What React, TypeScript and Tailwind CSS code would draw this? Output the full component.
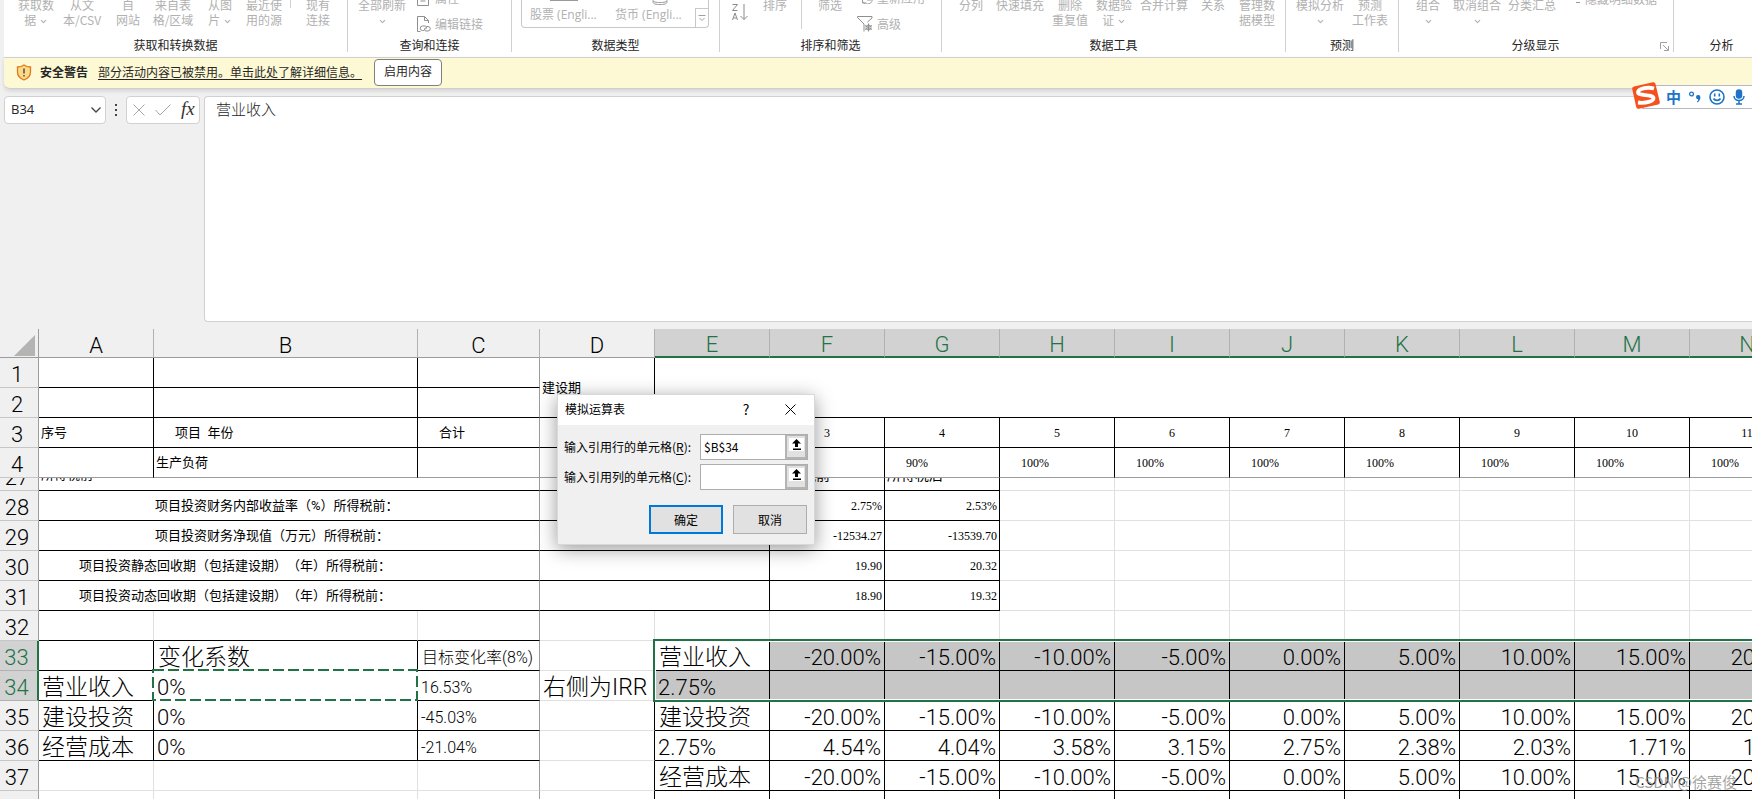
import { useState } from "react";
import type { ReactNode } from "react";
import { ChevronDown } from "lucide-react";

type Line = "black" | "grid" | "none" | "freeze";

type Cell = {
  text?: string;
  span?: number;
  rows?: number;
  className?: string;
  right?: Line;
  bottom?: Line;
  copied?: boolean;
};

type Row = { n: number; cells: Cell[]; height?: string };

const RIGHT: Record<Line, string> = {
  black: "border-r border-r-black",
  grid: "border-r border-r-[#e0e0e0]",
  freeze: "border-r border-r-[#9c9c9c]",
  none: "",
};

const BOTTOM: Record<Line, string> = {
  black: "border-b border-b-black",
  grid: "border-b border-b-[#e0e0e0]",
  freeze: "border-b border-b-[#9c9c9c]",
  none: "",
};

const COLUMNS = ["A", "B", "C", "D", "E", "F", "G", "H", "I", "J", "K", "L", "M", "N"];

const small = "text-[13px] font-normal [text-spacing-trim:space-all]";
const num = "text-xs font-['Liberation_Serif','Noto_Sans_CJK_SC',serif]";
const big = "pt-1 text-[23px] leading-[25px] font-light";
const pct = "pt-1 text-[22px] leading-[25px] font-light text-right pr-[3px]";
const pctLeft = "pt-1 text-[22px] leading-[25px] font-light pl-[3px]";
const mid = "pt-1 text-base leading-[25px] font-light";

const yearCells: Cell[] = ["3", "4", "5", "6", "7", "8", "9", "10", "11"].map((text) => ({
  text,
  className: `${num} text-center`,
}));

const loadCells: Cell[] = ["", "90%", "100%", "100%", "100%", "100%", "100%", "100%", "100%"].map((text) => ({
  text,
  className: `${num} pl-[21px]`,
  bottom: "freeze" as Line,
}));

const blanks = (count: number, line: Line = "grid"): Cell[] =>
  Array.from({ length: count }, () => ({ right: line, bottom: line }));

const series = (values: string[]): Cell[] => values.map((text) => ({ text, className: pct }));

const CHANGES = ["-20.00%", "-15.00%", "-10.00%", "-5.00%", "0.00%", "5.00%", "10.00%", "15.00%", "20.00%"];
const INVESTMENT = ["4.54%", "4.04%", "3.58%", "3.15%", "2.75%", "2.38%", "2.03%", "1.71%", "1.41%"];

const result = (text: string, indent: string, before: string, after: string): Cell[] => [
  { text, span: 3, className: `${small} ${indent}`, right: "freeze" },
  { span: 2 },
  { text: before, className: `${num} text-right pr-[2px]` },
  { text: after, className: `${num} text-right pr-[2px]` },
  ...blanks(7),
];

const ROWS: Row[] = [
  {
    n: 1,
    cells: [
      {},
      {},
      { right: "freeze" },
      { text: "建设期", rows: 2, className: `${small} pl-[2px]` },
      { span: 10, rows: 2 },
    ],
  },
  { n: 2, cells: [{}, {}, { right: "freeze" }] },
  {
    n: 3,
    cells: [
      { text: "序号", className: `${small} pl-[2px]` },
      { text: "项目  年份", className: `${small} pl-[21px]` },
      { text: "合计", className: `${small} pl-[21px]`, right: "freeze" },
      {},
      {},
      ...yearCells,
    ],
  },
  {
    n: 4,
    cells: [
      { bottom: "freeze" },
      { text: "生产负荷", className: `${small} pl-[2px]`, bottom: "freeze" },
      { bottom: "freeze", right: "freeze" },
      { bottom: "freeze" },
      { bottom: "freeze" },
      ...loadCells,
    ],
  },
  {
    n: 27,
    height: "h-[13px]",
    cells: [
      { text: "所得税前", span: 3, className: `${small} pl-[2px]`, right: "freeze" },
      { span: 2 },
      { text: "所得税前", className: "text-sm pl-1" },
      { text: "所得税后", className: "text-sm pl-[2px]" },
      ...blanks(7),
    ],
  },
  { n: 28, cells: result("项目投资财务内部收益率（%）所得税前：", "pl-[116px]", "2.75%", "2.53%") },
  { n: 29, cells: result("项目投资财务净现值（万元）所得税前：", "pl-[116px]", "-12534.27", "-13539.70") },
  { n: 30, cells: result("项目投资静态回收期（包括建设期）（年）所得税前：", "pl-[40px]", "19.90", "20.32") },
  { n: 31, cells: result("项目投资动态回收期（包括建设期）（年）所得税前：", "pl-[40px]", "18.90", "19.32") },
  {
    n: 32,
    cells: [
      { right: "grid" },
      { right: "grid" },
      { right: "freeze" },
      ...blanks(11),
    ],
  },
  {
    n: 33,
    cells: [
      {},
      { text: "变化系数", className: `${big} pl-1` },
      { text: "目标变化率(8%)", className: `${mid} pl-1`, right: "freeze" },
      { right: "grid", bottom: "grid" },
      { text: "营业收入", className: `${big} pl-1` },
      ...series(CHANGES).map((c) => ({ ...c, className: `${pct} bg-[#c6c6c6]` })),
    ],
  },
  {
    n: 34,
    cells: [
      { text: "营业收入", className: `${big} pl-[3px]` },
      { text: "0%", className: pctLeft, copied: true },
      { text: "16.53%", className: `${mid} pl-[3px]`, right: "freeze" },
      { text: "右侧为IRR", className: `${big} pl-[3px]`, right: "grid", bottom: "grid" },
      { text: "2.75%", className: `${pctLeft} bg-[#c6c6c6]` },
      ...Array.from({ length: 9 }, () => ({ className: "bg-[#c6c6c6]" })),
    ],
  },
  {
    n: 35,
    cells: [
      { text: "建设投资", className: `${big} pl-[3px]` },
      { text: "0%", className: pctLeft },
      { text: "-45.03%", className: `${mid} pl-[3px]`, right: "freeze" },
      { bottom: "grid" },
      { text: "建设投资", className: `${big} pl-1` },
      ...series(CHANGES),
    ],
  },
  {
    n: 36,
    cells: [
      { text: "经营成本", className: `${big} pl-[3px]` },
      { text: "0%", className: pctLeft },
      { text: "-21.04%", className: `${mid} pl-[3px]`, right: "freeze" },
      { bottom: "grid" },
      { text: "2.75%", className: pctLeft },
      ...series(INVESTMENT),
    ],
  },
  {
    n: 37,
    cells: [
      ...blanks(2),
      { right: "freeze", bottom: "grid" },
      { bottom: "grid" },
      { text: "经营成本", className: `${big} pl-1` },
      ...series(CHANGES),
    ],
  },
  {
    n: 38,
    cells: [...blanks(2), { right: "freeze", bottom: "grid" }, { bottom: "grid" }, ...blanks(10, "black")],
  },
];

function Drop() {
  return <ChevronDown className="inline size-[9px]" strokeWidth={3} />;
}

function Tool({ lines, className = "" }: { lines: ReactNode[]; className?: string }) {
  return (
    <button className={`flex shrink-0 flex-col items-center whitespace-nowrap text-xs leading-[15px] ${className}`}>
      {lines.map((line, i) => (
        <span key={i} className="h-[15px]">
          {line}
        </span>
      ))}
    </button>
  );
}

function Group({ title, className, children, launcher }: { title: string; className: string; children?: ReactNode; launcher?: boolean }) {
  return (
    <section className={`flex h-[52px] shrink-0 flex-col border-r border-[#d1d1d1] ${className}`}>
      <div className="flex h-[37px] items-start text-[#b1b1b1]">{children}</div>
      <div className="flex h-[15px] items-center justify-center text-xs text-[#262626]">
        <h2 className="grow text-center">{title}</h2>
        {launcher && (
          <svg className="-ml-3 mr-1 mt-1 size-[9px]" viewBox="0 0 9 9" fill="none" stroke="#a0a0a0">
            <path d="M.5 7V.5H7M3 3l5 5M8.5 4v4.5H4" />
          </svg>
        )}
      </div>
    </section>
  );
}

function DocIcon({ link }: { link?: boolean }) {
  return (
    <svg className="h-4 w-[14px]" viewBox="0 0 14 16" fill="none" stroke="#8f8f8f">
      <path d="M3.500 15.500H.5V.5H7.500L11.500 4.500V7M7.500.5V4.500H11.500" />
      {link ? (
        <path d="M7 14.500H5.500a2.200 2.200 0 0 1 0-4.500H8c2 0 2 3 .5 3M9.500 10.500H11a2.200 2.200 0 0 1 0 4.500H9c-2 0-2-3-.5-3" />
      ) : (
        <path d="M11.500 7V15.500H3M3.500 8h5M3.500 11h5" />
      )}
    </svg>
  );
}

function Ribbon() {
  return (
    <div className="ml-1 flex h-[57px] overflow-hidden bg-white">
      <Group title="获取和转换数据" className="w-[344px]">
        <Tool className="-mt-[3px] ml-[14px] w-9" lines={["获取数", <>据 <Drop /></>]} />
        <Tool className="-mt-[3px] ml-2 w-10" lines={["从文", "本/CSV"]} />
        <Tool className="-mt-[3px] ml-[14px] w-6" lines={["自", "网站"]} />
        <Tool className="-mt-[3px] ml-3 w-[42px]" lines={["来自表", "格/区域"]} />
        <Tool className="-mt-[3px] ml-[14px] w-6" lines={["从图", <>片 <Drop /></>]} />
        <Tool className="-mt-[3px] ml-[14px] w-9" lines={["最近使", "用的源"]} />
        <span className="ml-2 h-2 w-px bg-[#d1d1d1]" />
        <Tool className="-mt-[3px] ml-[15px] w-6" lines={["现有", "连接"]} />
      </Group>
      <Group title="查询和连接" className="w-[164px]">
        <Tool className="-mt-[3px] ml-[10px] w-12" lines={["全部刷新", <Drop />]} />
        <div className="-mt-[10px] ml-[11px] flex flex-col gap-[10px] text-xs leading-4">
          <button className="flex items-center gap-1"><DocIcon />属性</button>
          <button className="flex items-center gap-1"><DocIcon link />编辑链接</button>
        </div>
      </Group>
      <Group title="数据类型" className="w-[208px]">
        <div className="ml-[9px] flex h-7 w-[188px] rounded-b border border-t-0 border-[#c8c8c8] text-xs">
          <button className="relative flex-1 pl-2 pt-[2px] text-left leading-5 font-['Open_Sans','Noto_Sans_CJK_SC',sans-serif]">
            <span className="absolute left-7 top-0 h-px w-7 bg-[#9a9a9a]" />
            股票 (Engli...
          </button>
          <button className="relative flex-1 pl-[5px] pt-[2px] text-left leading-5 font-['Open_Sans','Noto_Sans_CJK_SC',sans-serif]">
            <svg className="absolute left-[42px] top-0 h-[5px] w-4" viewBox="0 0 16 5" fill="none" stroke="#9a9a9a">
              <path d="M1 0c0 2 3 2.500 7 2.500S15 2 15 0M1 1v1c0 2 3 2.500 7 2.500S15 4 15 2V1" />
            </svg>
            货币 (Engli...
          </button>
          <button className="mt-2 flex w-[13px] items-center justify-center border-l border-t border-[#c8c8c8]" aria-label="更多">
            <svg className="size-2" viewBox="0 0 8 8" fill="none" stroke="#a0a0a0">
              <path d="M.5 1.500h7M1.500 4l2.500 2.500L6.500 4" />
            </svg>
          </button>
        </div>
      </Group>
      <Group title="排序和筛选" className="w-[222px]">
        <svg className="ml-3 mt-1 h-[17px] w-4" viewBox="0 0 16 17" fill="none" stroke="#8a8a8a">
          <path d="M.5.5h5L.5 6.500h5M.5 16L3 9l2.500 7M1.500 14h3M12 0v15.500M8.500 12l3.500 3.500L15.500 12" />
        </svg>
        <Tool className="-mt-[3px] ml-[15px] w-6" lines={["排序"]} />
        <span className="ml-[14px] h-[29px] w-px bg-[#d1d1d1]" />
        <Tool className="-mt-[3px] ml-4 w-6" lines={["筛选"]} />
        <div className="-mt-[10px] ml-[15px] flex flex-col gap-[10px] text-xs leading-4">
          <button className="flex items-center gap-1 pl-1">
            <svg className="size-3" viewBox="0 0 12 12" fill="none" stroke="#9a9a9a">
              <path d="M1.500 1v10M1.500 11h4M1 8a5 5 0 0 1 9-3M11 6a5 5 0 0 1-9 4M6 8h4v-4" />
            </svg>
            重新应用
          </button>
          <button className="flex items-center gap-1">
            <svg className="size-4" viewBox="0 0 16 16" fill="none" stroke="#8f8f8f">
              <path d="M7 15.500V8L.5 1.500V.5H15V2L10.500 6" />
              <circle cx="11.500" cy="11.500" r="2.500" />
              <path d="M11.500 7.500v8M8 9.500l7 4M15 9.500l-7 4" />
            </svg>
            高级
          </button>
        </div>
      </Group>
      <Group title="数据工具" className="w-[344px]">
        <Tool className="-mt-[3px] ml-[17px] w-6" lines={["分列"]} />
        <Tool className="-mt-[3px] ml-[13px] w-12" lines={["快速填充"]} />
        <Tool className="-mt-[3px] ml-2 w-9" lines={["删除", "重复值"]} />
        <Tool className="-mt-[3px] ml-2 w-9" lines={["数据验", <>证 <Drop /></>]} />
        <Tool className="-mt-[3px] ml-2 w-12" lines={["合并计算"]} />
        <Tool className="-mt-[3px] ml-[13px] w-6" lines={["关系"]} />
        <Tool className="-mt-[3px] ml-[14px] w-9" lines={["管理数", "据模型"]} />
      </Group>
      <Group title="预测" className="w-[113px]">
        <Tool className="-mt-[3px] ml-[10px] w-12" lines={["模拟分析", <Drop />]} />
        <Tool className="-mt-[3px] ml-2 w-9" lines={["预测", "工作表"]} />
      </Group>
      <Group title="分级显示" className="w-[275px]" launcher>
        <Tool className="-mt-[3px] ml-[17px] w-6" lines={["组合", <Drop />]} />
        <Tool className="-mt-[3px] ml-[13px] w-12" lines={["取消组合", <Drop />]} />
        <Tool className="-mt-[3px] ml-[7px] w-12" lines={["分类汇总"]} />
        <span className="ml-5 mt-[2px] h-px w-1 bg-[#9a9a9a]" />
        <Tool className="-mt-[9px] ml-[5px]" lines={["隐藏明细数据"]} />
      </Group>
      <Group title="分析" className="w-[96px]" />
    </div>
  );
}

function SecurityBar() {
  return (
    <div className="ml-1 flex h-8 items-center rounded-bl-md border-y border-[#cfcfcf] bg-[#fef9d5] pb-[2px] pl-3 text-xs text-[#262626] shadow-[0_2px_4px_rgba(0,0,0,0.12)]">
      <svg className="h-[17px] w-4" viewBox="0 0 16 17">
        <path d="M8 1c2 1.500 4 2 6.500 2v5c0 4-2.500 6.500-6.500 8C4 14.500 1.500 12 1.500 8V3C4 3 6 2.500 8 1z" fill="#fbd98a" stroke="#e07b1a" strokeWidth="1.300" />
        <path d="M8 4.500v5M8 11v1.500" stroke="#5c5030" strokeWidth="1.500" />
      </svg>
      <strong className="ml-2">安全警告</strong>
      <a href="#details" className="ml-[10px] underline underline-offset-2">
        部分活动内容已被禁用。单击此处了解详细信息。
      </a>
      <button className="ml-3 h-[27px] w-[68px] rounded border border-[#7f7f7f] bg-white pb-[2px]">启用内容</button>
    </div>
  );
}

function FormulaBar() {
  const [formula, setFormula] = useState("营业收入");
  return (
    <div className="flex h-[226px] items-start pl-1">
      <div className="flex h-7 w-[102px] items-center rounded border border-[#d1d1d1] bg-white pr-1">
        <input
          aria-label="名称框"
          defaultValue="B34"
          className="w-0 grow pl-[6px] text-[13px] text-[#262626] outline-none font-['Open_Sans','Noto_Sans_CJK_SC',sans-serif]"
        />
        <svg className="h-[6px] w-[10px]" viewBox="0 0 10 6" fill="none" stroke="#444" strokeWidth="1.300">
          <path d="M.5.5L5 5L9.500.5" />
        </svg>
      </div>
      <div className="mx-2 flex h-7 w-1 flex-col items-center justify-center gap-[3px]">
        <span className="size-[2px] bg-[#444]" />
        <span className="size-[2px] bg-[#444]" />
        <span className="size-[2px] bg-[#444]" />
      </div>
      <div className="flex h-7 w-[74px] items-center rounded border border-[#d1d1d1] bg-white pl-[6px]">
        <button aria-label="取消">
          <svg className="size-3" viewBox="0 0 12 12" stroke="#a8a8a8" fill="none">
            <path d="M.5.5l11 11M11.500.5l-11 11" />
          </svg>
        </button>
        <button aria-label="输入" className="ml-[10px]">
          <svg className="h-3 w-4" viewBox="0 0 16 12" stroke="#a8a8a8" fill="none">
            <path d="M.5 6l4.500 5L15.500.5" />
          </svg>
        </button>
        <button className="ml-[10px] pb-[2px] text-[19px] italic leading-5 text-[#333] font-['Liberation_Serif',serif]">fx</button>
      </div>
      <textarea
        aria-label="编辑栏"
        value={formula}
        onChange={(e) => setFormula(e.target.value)}
        className="ml-1 h-[226px] w-0 grow resize-none rounded-l-[4px] border border-r-0 border-[#d1d1d1] bg-white px-[11px] py-0 text-[15px] leading-6 text-[#262626] outline-none font-['Noto_Sans_CJK_SC',sans-serif] font-light"
      />
    </div>
  );
}

function SheetCell({ cell, clip }: { cell: Cell; clip?: boolean }) {
  const { text, span, rows, className = "", right = "black", bottom = "black", copied } = cell;
  return (
    <td
      colSpan={span}
      rowSpan={rows}
      className={`whitespace-pre p-0 align-middle ${RIGHT[right]} ${BOTTOM[bottom]} ${copied ? "relative overflow-visible" : "overflow-hidden"} ${className}`}
    >
      {clip ? (
        <div className="flex h-3 items-end overflow-hidden leading-[18px]">{text && <span className="pb-[6px]">{text}</span>}</div>
      ) : (
        text
      )}
      {copied && (
        <svg className="absolute -left-[2px] -top-[2px] h-8 w-[266px]" fill="none" stroke="#217346" strokeWidth="2">
          <rect x="1" y="1" width="264" height="30" stroke="#fff" />
          <rect x="1" y="1" width="264" height="30" strokeDasharray="11 4" />
        </svg>
      )}
    </td>
  );
}

function Sheet() {
  return (
    <div className="relative mt-[7px] overflow-hidden bg-white">
      <table className="w-[1920px] table-fixed border-separate border-spacing-0 text-black font-['Roboto','Noto_Sans_CJK_SC',sans-serif]">
        <colgroup>
          <col className="w-[39px]" />
          <col className="w-[115px]" />
          <col className="w-[264px]" />
          <col className="w-[122px]" />
          {COLUMNS.slice(3).map((c) => (
            <col key={c} className="w-[115px]" />
          ))}
          <col />
        </colgroup>
        <thead>
          <tr className="h-[29px]">
            <th className="border-b border-r border-[#9c9c9c] bg-[#f0f0f0] p-0">
              <svg className="ml-[14px] mt-1 h-[21px] w-[21px]" viewBox="0 0 21 21">
                <path d="M21 0v21H0z" fill="#b4b4b4" />
              </svg>
            </th>
            {COLUMNS.map((c, i) => (
              <th
                key={c}
                className={`p-0 pt-[5px] text-[22px] font-light leading-[22px] ${
                  i > 3
                    ? "border-b-2 border-r border-b-[#217346] border-r-[#b1b1b1] bg-[#d2d2d2] text-[#217346]"
                    : "border-b border-r border-b-[#9c9c9c] border-r-[#b1b1b1] bg-[#f0f0f0]"
                }`}
              >
                {c}
              </th>
            ))}
          </tr>
        </thead>
        <tbody>
          {ROWS.map((row) => {
            const clip = row.n === 27;
            const selected = row.n === 33 || row.n === 34;
            return (
              <tr key={row.n} className={`leading-[29px] ${row.height ?? "h-[30px]"}`}>
                <th
                  className={`overflow-hidden p-0 text-[22px] font-light ${
                    selected
                      ? "border-b border-r-2 border-b-[#b1b1b1] border-r-[#217346] bg-[#d2d2d2] text-[#217346]"
                      : "border-b border-r border-b-[#c6c6c6] border-r-[#9c9c9c] bg-[#f0f0f0]"
                  }`}
                >
                  <div
                    className={
                      clip ? "flex h-3 items-end justify-center overflow-hidden pr-1" : "h-[29px] pr-1 pt-[5px] leading-6"
                    }
                  >
                    {clip ? <span className="leading-6">27</span> : row.n}
                  </div>
                </th>
                {row.cells.map((cell, i) => (
                  <SheetCell key={i} cell={cell} clip={clip} />
                ))}
              </tr>
            );
          })}
        </tbody>
      </table>
      {/* Selection outline over E33:N34 */}
      <div className="pointer-events-none absolute left-[653px] top-[310px] h-[63px] w-[1400px] border-2 border-[#217346]">
        <div className="h-full border border-white" />
      </div>
    </div>
  );
}

function RefField({ id, label, hotkey, value }: { id: string; label: string; hotkey: string; value: string }) {
  return (
    <div className="flex h-[26px] items-center">
      <label htmlFor={id} className="grow whitespace-nowrap pb-px">
        {label}(<u className="underline-offset-2">{hotkey}</u>):
      </label>
      <div className="flex h-[26px] w-[108px] border border-[#adadad] bg-white">
        <input id={id} defaultValue={value} className="w-0 grow pb-px pl-[3px] outline-none" />
        <button aria-label="选择区域" className="flex w-[22px] items-start justify-center border-2 border-t border-[#b4b4b4] bg-[#e1e1e1] pt-[2px]">
          <svg className="h-[13px] w-[15px] bg-white" viewBox="0 0 15 13">
            <path d="M7.500 1L12 5.500H9V9H6V5.500H3zM4 10.500h8V12H4z" fill="#000" />
          </svg>
        </button>
      </div>
    </div>
  );
}

function DataTableDialog() {
  return (
    <form
      onSubmit={(e) => e.preventDefault()}
      className="absolute left-[557px] top-[394px] w-[258px] border border-[#d8d8d8] bg-[#f0f0f0] pb-[10px] text-xs text-black shadow-[0_4px_18px_rgba(0,0,0,0.4)] font-['Noto_Sans_CJK_SC',sans-serif]"
    >
      <div className="flex h-[30px] items-center bg-white pb-[2px] pl-[7px]">
        <h3 className="grow">模拟运算表</h3>
        <button type="button" className="w-[10px] text-sm">?</button>
        <button type="button" aria-label="关闭" className="ml-[34px] mr-[18px]">
          <svg className="size-[11px]" viewBox="0 0 11 11" stroke="#000" fill="none">
            <path d="M.5.5l10 10M10.500.5l-10 10" />
          </svg>
        </button>
      </div>
      <div className="mt-[9px] flex flex-col gap-1 pl-[6px] pr-[6px]">
        <RefField id="row-ref" label="输入引用行的单元格" hotkey="R" value="$B$34" />
        <RefField id="col-ref" label="输入引用列的单元格" hotkey="C" value="" />
      </div>
      <div className="mt-[15px] flex justify-end gap-[10px] pr-[7px]">
        <button className="h-[29px] w-[74px] border-2 border-[#0078d7] bg-[#e1e1e1]">确定</button>
        <button type="button" className="h-[29px] w-[74px] border border-[#adadad] bg-[#e1e1e1]">取消</button>
      </div>
    </form>
  );
}

function InputMethodBar() {
  return (
    <div className="absolute right-0 top-[85px] flex h-6 w-[110px] items-center border-y border-[#b8b8c4] bg-white pl-6 text-[#1c73c8]">
      <svg className="absolute -left-[10px] -top-1 h-[27px] w-7" viewBox="0 0 28 27">
        <path d="M2 4.500L21 .3q2-.3 2.500 1.700L27.800 20q.3 2-1.600 2.500L7 26.800q-2.300.3-2.800-1.800L.2 7Q0 5 2 4.500z" fill="#f4511e" />
        <path d="M22 6.500C15 4.500 6 7 6 10.500c0 3.500 15 1.500 15.500 5.500.3 3.500-8 5.500-15.500 4.500" fill="none" stroke="#fff" strokeWidth="3.800" />
      </svg>
      <span className="text-[15px] font-bold leading-5">中</span>
      <svg className="ml-2 h-3 w-3" viewBox="0 0 12 12">
        <circle cx="2.500" cy="3" r="1.900" fill="none" stroke="#1c73c8" strokeWidth="1.300" />
        <path d="M9 4a2.200 2.200 0 0 1 2.400 2.300c0 2.600-1.400 4.500-3.400 5.200v-1c1-.7 1.300-1.500 1.200-2.300A2.100 2.100 0 0 1 9 4z" fill="#1c73c8" />
      </svg>
      <svg className="ml-2 size-4" viewBox="0 0 16 16" fill="none" stroke="#1c73c8" strokeWidth="1.600">
        <circle cx="8" cy="8" r="7" />
        <path d="M5.700 4.500v3M10.300 4.500v3M4.500 9.500c1.500 2.500 5.500 2.500 7 0" />
      </svg>
      <svg className="ml-2 h-4 w-3" viewBox="0 0 12 16" fill="none" stroke="#1c73c8" strokeWidth="1.500">
        <rect x="3.500" y="1" width="5" height="8" rx="2.500" fill="#1c73c8" />
        <path d="M1 7c0 6 10 6 10 0M6 12v3M3 15h6" />
      </svg>
    </div>
  );
}

export default function App() {
  return (
    <main className="relative h-screen overflow-hidden bg-[#f0f0f0] font-['Noto_Sans_CJK_SC',sans-serif]">
      <Ribbon />
      <SecurityBar />
      <div className="mt-[7px]">
        <FormulaBar />
      </div>
      <Sheet />
      <DataTableDialog />
      <InputMethodBar />
      <p className="absolute bottom-[9px] right-[15px] text-[15px] leading-4 text-[#8c8c8c]/80">CSDN @徐赛俊</p>
    </main>
  );
}
